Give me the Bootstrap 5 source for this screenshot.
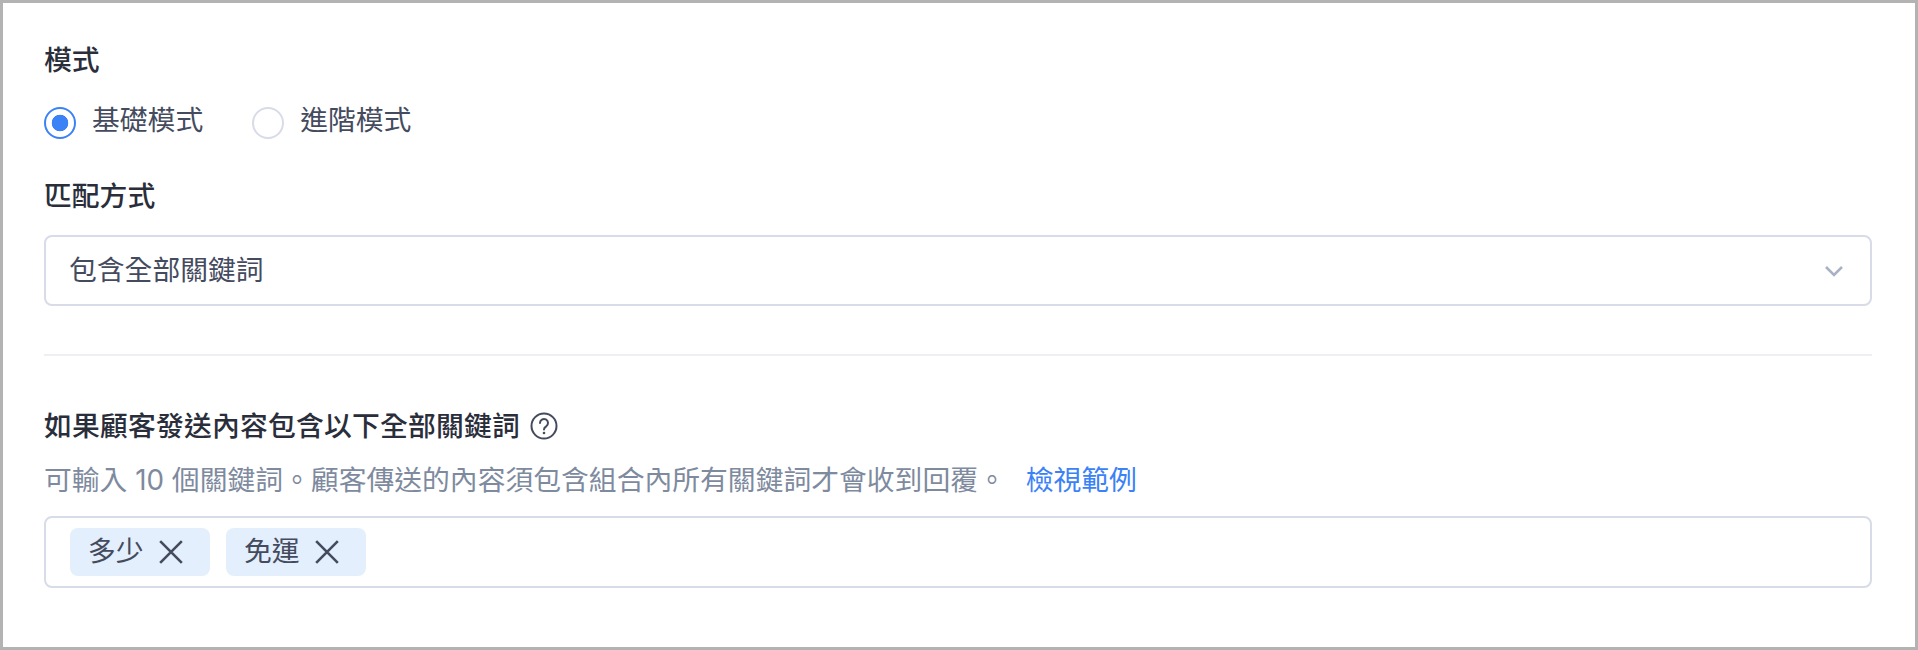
<!DOCTYPE html>
<html lang="zh-Hant">
<head>
<meta charset="utf-8">
<title>關鍵詞設定</title>
<link href="https://cdn.jsdelivr.net/npm/bootstrap@5.3.0/dist/css/bootstrap.min.css" rel="stylesheet">
<style>
html,body{margin:0;background:#fff}
body{font-family:Inter,"Noto Sans CJK TC",sans-serif;font-size:27.8px;color:#454b5e}
.frame{width:1918px;height:650px;border:3px solid #b3b3b3;padding:37px 43px 0 41px;overflow:hidden}
.fld-label{display:block;font-size:27.8px;line-height:40px;font-weight:500;color:#2a2e3b;margin:0}
.fld-gap{margin-top:33px}
.mode-row{gap:25px;margin-top:23px;height:40px}
.mode-row .form-check{display:flex;align-items:center;gap:16px;margin:0;padding:0;min-height:0}
.mode-row .form-check-input{width:32px;height:32px;margin:0;float:none;flex:none;border:2px solid #d8dbe8;background-color:#fff;box-shadow:none}
.mode-row .form-check-input:checked{border-color:#3b82f6;background-color:#fff;background-image:radial-gradient(circle,#3b82f6 0,#3b82f6 8px,transparent 8.6px)}
.mode-row .form-check-label{font-size:27.8px;line-height:32px;color:#454b5e;position:relative;top:-3px}
.sel-wrap{margin-top:19px}
.sel-box{height:71px;padding:0 23px;font-size:27.8px;color:#454b5e;border:2px solid #d8dbe8;border-radius:8px;background-size:20px 12px;background-position:right 26px center;background-image:url("data:image/svg+xml,%3csvg xmlns='http://www.w3.org/2000/svg' viewBox='0 0 20 12'%3e%3cpath fill='none' stroke='%23a9b1c5' stroke-width='2.5' d='M2 2l8 8 8-8'/%3e%3c/svg%3e");box-shadow:none}
.rule{margin:48px 0 0;height:2px;border:0;background:#eeeef3;opacity:1}
.sec-label{margin-top:50px;gap:10px;line-height:40px}
.sec-label .fld-label{letter-spacing:.2px}
.help-desc{margin-top:12px;line-height:40px;color:#7e8a9e;font-size:27.8px}
.help-desc a{color:#3b82f6;text-decoration:none;margin-left:12px}
.punct-sc{font-family:"Noto Sans CJK SC",sans-serif}
.tag-box{margin-top:16px;height:72px;border:2px solid #d8dbe8;border-radius:8px;padding:0 24px;gap:16px;display:flex;align-items:center}
.tag-chip{height:48px;width:140px;background:#e3effc;border-radius:8px;padding-left:18px;gap:14px;color:#454b5e;font-size:27.8px;display:flex;align-items:center}
</style>
</head>
<body>
<div class="frame">
  <label class="fld-label">模式</label>
  <div class="d-flex mode-row">
    <div class="form-check"><input class="form-check-input" type="radio" name="m" id="m1" checked><label class="form-check-label" for="m1">基礎模式</label></div>
    <div class="form-check ms-4"><input class="form-check-input" type="radio" name="m" id="m2"><label class="form-check-label" for="m2">進階模式</label></div>
  </div>
  <label class="fld-label fld-gap">匹配方式</label>
  <div class="sel-wrap">
    <select class="form-select sel-box"><option>包含全部關鍵詞</option></select>
  </div>
  <hr class="rule">
  <div class="d-flex align-items-center sec-label">
    <span class="fld-label">如果顧客發送內容包含以下全部關鍵詞</span>
    <svg width="28" height="28" viewBox="0 0 28 28" fill="none" stroke="#454b5e" stroke-width="2"><circle cx="14" cy="14" r="12.5"/><path d="M10 11a4 4 0 1 1 6.200 3.300c-1.400.9-2.200 1.700-2.200 3.200" stroke-linecap="round"/><circle cx="14" cy="21" r="1.300" fill="#454b5e" stroke="none"/></svg>
  </div>
  <div class="help-desc">可輸入 10 個關鍵詞<span class="punct-sc">。</span>顧客傳送的內容須包含組合內所有關鍵詞才會收到回覆<span class="punct-sc">。</span> <a href="#">檢視範例</a></div>
  <div class="tag-box">
    <span class="tag-chip">多少<svg width="26" height="26" viewBox="0 0 24 24" fill="none" stroke="#454b5e" stroke-width="2.400"><path d="M2 2l20 20M22 2L2 22"/></svg></span>
    <span class="tag-chip">免運<svg width="26" height="26" viewBox="0 0 24 24" fill="none" stroke="#454b5e" stroke-width="2.400"><path d="M2 2l20 20M22 2L2 22"/></svg></span>
  </div>
</div>
<script src="https://cdn.jsdelivr.net/npm/bootstrap@5.3.0/dist/js/bootstrap.bundle.min.js"></script>
</body>
</html>
